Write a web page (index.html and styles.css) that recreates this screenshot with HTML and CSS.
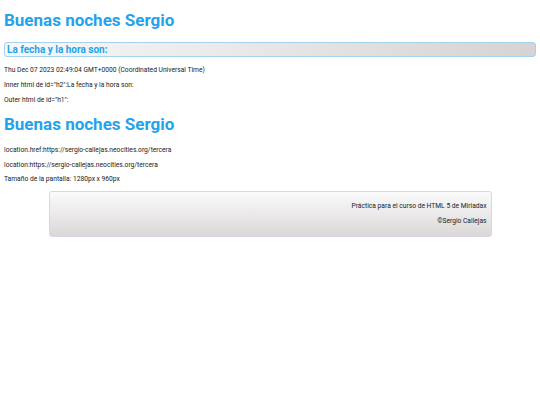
FILE: index.html
```html
<!DOCTYPE html>
<html lang="es">
<head>
<meta charset="utf-8">
<title>Tercera</title>
<link rel="stylesheet" href="styles.css">
</head>
<body>
<h1 class="title" id="h1">Buenas noches Sergio</h1>
<h2 class="subtitle" id="h2">La fecha y la hora son:</h2>
<p class="line">Thu Dec 07 2023 02:49:04 GMT+0000 (Coordinated Universal Time)</p>
<p class="line">Inner html de id="h2":La fecha y la hora son:</p>
<p class="line">Outer html de id="h1":</p>
<h1 class="title title-copy">Buenas noches Sergio</h1>
<p class="line line-tight">location.href:https://sergio-callejas.neocities.org/tercera</p>
<p class="line line-tight">location:https://sergio-callejas.neocities.org/tercera</p>
<p class="line line-tight">Tamaño de la pantalla: 1280px x 960px</p>
<footer class="footer">
  <p class="footer-line">Práctica para el curso de HTML 5 de Miriadax</p>
  <p class="footer-line">©Sergio Callejas</p>
</footer>
</body>
</html>
```
FILE: styles.css
```css
html, body { background: #ffffff; }
body {
  margin: 4px;
  font-family: Roboto, "Liberation Sans", sans-serif;
  color: #222;
}
.title {
  font-size: 17px;
  font-weight: 700;
  color: #1fa3ec;
  margin: 6px 0 12px 0;
  line-height: 20px;
}
.title-copy { margin: 10px 0 12px 0; }
.subtitle {
  font-size: 10px;
  font-weight: 700;
  color: #1fa3ec;
  margin: 0 0 9px 0;
  height: 13px;
  line-height: 13px;
  padding: 0 2px;
  border: 1px solid #a3d2ee;
  border-radius: 3px;
  background: linear-gradient(to right, #f8f8f8, #d8d3d3);
}
.line {
  font-size: 6.7px;
  line-height: 8px;
  margin: 0 0 7px 0;
}
.line-tight { margin-bottom: 6.5px; }
.footer {
  width: 433px;
  margin: 8px auto 0 auto;
  border: 1px solid #ddd2ee;
  border-radius: 3px;
  background: linear-gradient(to bottom, #fbfbfb, #dbd7d7);
  padding: 10px 4px 11px 4px;
  text-align: right;
}
.footer-line {
  font-size: 6.7px;
  line-height: 8px;
  margin: 0 0 7px 0;
}
.footer-line:last-child { margin-bottom: 0; }
```
